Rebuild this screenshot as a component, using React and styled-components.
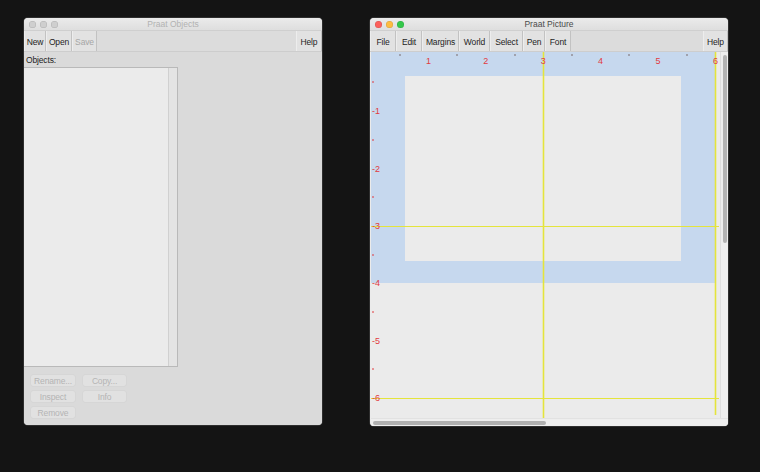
import React from 'react';
import styled, { createGlobalStyle } from 'styled-components';

const GlobalStyle = createGlobalStyle`
  html, body {
    margin: 0;
    background: #141414;
  }
  body {
    font-family: "Liberation Sans", Arial, sans-serif;
  }
`;

const Desktop = styled.div`
  width: 760px;
  height: 472px;
  box-sizing: border-box;
  padding: 18px 0 0 24px;
  display: flex;
  align-items: flex-start;
  gap: 48px;
  background: #141414;
`;

const Window = styled.div`
  width: ${({ w }) => w}px;
  height: ${({ h }) => h}px;
  display: flex;
  flex-direction: column;
  border-radius: 4px;
  overflow: hidden;
  background: #dadada;
  box-shadow: 0 0 0 1px #2e2e2e;
`;

const TitleBar = styled.div`
  height: 13px;
  flex: none;
  position: relative;
  display: flex;
  align-items: center;
  justify-content: center;
  background: linear-gradient(#ebebeb, #dedede);
  border-bottom: 1px solid #cfcfcf;
  box-sizing: border-box;
  font-size: 8.5px;
  color: ${({ active }) => (active ? '#4a4a4a' : '#b2b2b2')};
`;

const Lights = styled.div`
  position: absolute;
  left: 5px;
  top: 3px;
  display: flex;
  gap: 4px;
`;

const Light = styled.span`
  width: 7px;
  height: 7px;
  border-radius: 50%;
  background: ${({ color }) => color};
  box-shadow: inset 0 0 0 0.5px rgba(0, 0, 0, 0.15);
`;

const Toolbar = styled.div`
  height: 21px;
  flex: none;
  display: flex;
  background: #dcdcdc;
  border-bottom: 1px solid #cdcdcd;
  box-sizing: border-box;
`;

const ToolButton = styled.div`
  width: ${({ w }) => w}px;
  flex: none;
  box-sizing: border-box;
  display: flex;
  align-items: center;
  justify-content: center;
  padding-top: 1px;
  font-size: 8.5px;
  letter-spacing: -0.15px;
  color: ${({ disabled }) => (disabled ? '#a6a6a6' : '#1e1e1e')};
  background: #e2e2e2;
  border-left: 1px solid #ededed;
  border-right: 1px solid #c2c2c2;
  ${({ right }) => right && 'margin-left: auto;'}
`;

const ObjectsBody = styled.div`
  flex: 1;
  display: flex;
  flex-direction: column;
  background: #dadada;
`;

const Label = styled.div`
  height: 15px;
  padding: 1px 0 0 2px;
  display: flex;
  align-items: center;
  font-size: 8.5px;
  letter-spacing: -0.15px;
  color: #222;
  box-sizing: border-box;
`;

const ListBox = styled.div`
  width: 154px;
  height: 300px;
  display: flex;
  justify-content: flex-end;
  background: #ebebeb;
  border: 1px solid #b9b9b9;
  border-left: none;
  box-sizing: border-box;
`;

const ListTrack = styled.div`
  width: 8px;
  background: #e4e4e4;
  border-left: 1px solid #d0d0d0;
`;

const ActionGrid = styled.div`
  display: grid;
  grid-template-columns: 44px 43px;
  column-gap: 8px;
  row-gap: 5px;
  padding: 8px 0 0 7px;
`;

const ActionButton = styled.div`
  height: 11px;
  display: flex;
  align-items: center;
  justify-content: center;
  font-size: 8.5px;
  letter-spacing: -0.15px;
  color: #b4b4b4;
  background: #e1e1e1;
  border-radius: 2px;
  box-shadow: 0 0 0 0.5px #d2d2d2;
`;

const PictureBody = styled.div`
  flex: 1;
  display: flex;
  flex-direction: column;
  background: #ebebeb;
  padding-left: 1px;
`;

const CanvasRow = styled.div`
  display: flex;
  height: 366px;
`;

const Canvas = styled.svg`
  display: block;
  width: 349px;
  height: 366px;
  background: #ebebeb;
`;

const VTrack = styled.div`
  width: 8px;
  background: #eeeeee;
  border-left: 1px solid #dedede;
  padding: 3px 0 0 2px;
  box-sizing: border-box;
`;

const VThumb = styled.div`
  width: 4px;
  height: 188px;
  border-radius: 2px;
  background: #b3b3b3;
`;

const HTrack = styled.div`
  flex: 1;
  background: #eeeeee;
  border-top: 1px solid #e2e2e2;
  padding: 2px 0 0 2px;
`;

const HThumb = styled.div`
  width: 173px;
  height: 4px;
  border-radius: 2px;
  background: #b0b0b0;
`;

const UNIT = 57.4;
const RED = '#e23a3e';
const YELLOW = '#e4e43c';

function PictureCanvas() {
  const nums = [1, 2, 3, 4, 5, 6];
  return (
    <Canvas viewBox="0 0 349 366">
      <rect x="0" y="0" width="344" height="231" fill="#c6d8ee" />
      <rect x="34" y="24" width="276" height="185" fill="#ebebeb" />

      {/* selection cross-hair lines */}
      <g stroke={YELLOW}>
        <line x1="172.5" y1="0" x2="172.5" y2="366" strokeWidth="1.6" />
        <line x1="344.5" y1="0" x2="344.5" y2="363" strokeWidth="1.6" />
        <line x1="0" y1="174.5" x2="348" y2="174.5" strokeWidth="1.2" />
        <line x1="0" y1="346.5" x2="348" y2="346.5" strokeWidth="1.2" />
      </g>

      {nums.map((k) => (
        <g key={`t${k}`}>
          <line
            x1={Math.round(k * UNIT - UNIT / 2)}
            y1="2"
            x2={Math.round(k * UNIT - UNIT / 2)}
            y2="4"
            stroke="#7a6a6a"
            strokeWidth="1"
          />
          <text x={k * UNIT} y="12" fontSize="9" fill={RED} textAnchor="middle">
            {k}
          </text>
        </g>
      ))}

      {nums.map((k) => (
        <g key={`l${k}`}>
          <line
            x1="1"
            y1={Math.round(k * UNIT + 1.6 - UNIT / 2)}
            x2="3"
            y2={Math.round(k * UNIT + 1.6 - UNIT / 2)}
            stroke={RED}
            strokeWidth="1"
          />
          <text x="1" y={k * UNIT + 4.8} fontSize="9" fill={RED}>
            -{k}
          </text>
        </g>
      ))}
    </Canvas>
  );
}

export default function App() {
  return (
    <>
      <GlobalStyle />
      <Desktop>
        <Window w={298} h={407}>
          <TitleBar>
            <Lights>
              <Light color="#cfcfcf" />
              <Light color="#cfcfcf" />
              <Light color="#cfcfcf" />
            </Lights>
            Praat Objects
          </TitleBar>
          <Toolbar>
            <ToolButton w={22}>New</ToolButton>
            <ToolButton w={26}>Open</ToolButton>
            <ToolButton w={25} disabled>
              Save
            </ToolButton>
            <ToolButton w={26} right>
              Help
            </ToolButton>
          </Toolbar>
          <ObjectsBody>
            <Label>Objects:</Label>
            <ListBox>
              <ListTrack />
            </ListBox>
            <ActionGrid>
              <ActionButton>Rename...</ActionButton>
              <ActionButton>Copy...</ActionButton>
              <ActionButton>Inspect</ActionButton>
              <ActionButton>Info</ActionButton>
              <ActionButton>Remove</ActionButton>
            </ActionGrid>
          </ObjectsBody>
        </Window>

        <Window w={358} h={408}>
          <TitleBar active>
            <Lights>
              <Light color="#fc605b" />
              <Light color="#fdbc40" />
              <Light color="#34c84a" />
            </Lights>
            Praat Picture
          </TitleBar>
          <Toolbar>
            <ToolButton w={26}>File</ToolButton>
            <ToolButton w={26}>Edit</ToolButton>
            <ToolButton w={37}>Margins</ToolButton>
            <ToolButton w={31}>World</ToolButton>
            <ToolButton w={33}>Select</ToolButton>
            <ToolButton w={22}>Pen</ToolButton>
            <ToolButton w={26}>Font</ToolButton>
            <ToolButton w={25} right>
              Help
            </ToolButton>
          </Toolbar>
          <PictureBody>
            <CanvasRow>
              <PictureCanvas />
              <VTrack>
                <VThumb />
              </VTrack>
            </CanvasRow>
            <HTrack>
              <HThumb />
            </HTrack>
          </PictureBody>
        </Window>
      </Desktop>
    </>
  );
}
